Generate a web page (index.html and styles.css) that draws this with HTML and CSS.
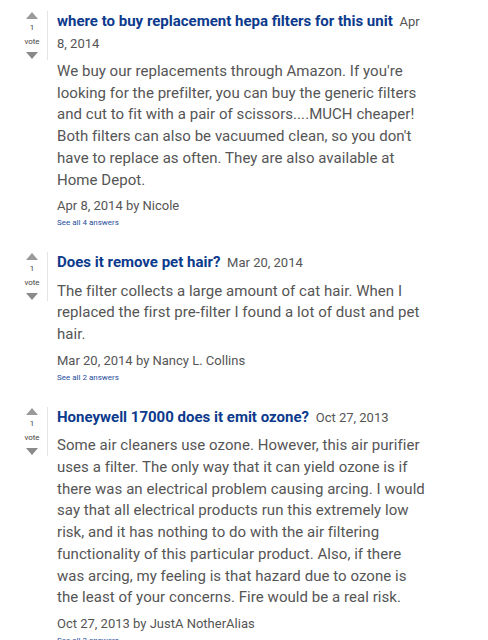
FILE: index.html
```html
<!DOCTYPE html>
<html>
<head>
<meta charset="utf-8">
<link rel="stylesheet" href="styles.css">
</head>
<body>
<div class="page">
  <div class="qa">
    <div class="vote">
      <span class="tri up"></span>
      <span class="count">1</span>
      <span class="label">vote</span>
      <span class="tri down"></span>
    </div>
    <div class="content">
      <div class="question"><a class="title">where to buy replacement hepa filters for this unit</a> <span class="qdate">Apr 8, 2014</span></div>
      <p class="answer">We buy our replacements through Amazon. If you're looking for the prefilter, you can buy the generic filters and cut to fit with a pair of scissors....MUCH cheaper! Both filters can also be vacuumed clean, so you don't have to replace as often. They are also available at Home Depot.</p>
      <div class="meta">Apr 8, 2014 by Nicole</div>
      <a class="seeall">See all 4 answers</a>
    </div>
  </div>
  <div class="qa">
    <div class="vote">
      <span class="tri up"></span>
      <span class="count">1</span>
      <span class="label">vote</span>
      <span class="tri down"></span>
    </div>
    <div class="content">
      <div class="question"><a class="title">Does it remove pet hair?</a> <span class="qdate">Mar 20, 2014</span></div>
      <p class="answer">The filter collects a large amount of cat hair. When I replaced the first pre-filter I found a lot of dust and pet hair.</p>
      <div class="meta">Mar 20, 2014 by Nancy L. Collins</div>
      <a class="seeall">See all 2 answers</a>
    </div>
  </div>
  <div class="qa">
    <div class="vote">
      <span class="tri up"></span>
      <span class="count">1</span>
      <span class="label">vote</span>
      <span class="tri down"></span>
    </div>
    <div class="content">
      <div class="question"><a class="title">Honeywell 17000 does it emit ozone?</a> <span class="qdate">Oct 27, 2013</span></div>
      <p class="answer">Some air cleaners use ozone. However, this air purifier uses a filter. The only way that it can yield ozone is if there was an electrical problem causing arcing. I would say that all electrical products run this extremely low risk, and it has nothing to do with the air filtering functionality of this particular product. Also, if there was arcing, my feeling is that hazard due to ozone is the least of your concerns. Fire would be a real risk.</p>
      <div class="meta">Oct 27, 2013 by JustA NotherAlias</div>
      <a class="seeall">See all 2 answers</a>
    </div>
  </div>
</div>
</body>
</html>
```
FILE: styles.css
```css
html, body {
  margin: 0;
  padding: 0;
  background: #ffffff;
}
body {
  font-family: Roboto, "Liberation Sans", sans-serif;
  color: #555555;
}
.page {
  padding: 11px 0 0 20px;
  width: 406px;
}
.qa {
  display: flex;
  align-items: flex-start;
  margin-bottom: 23px;
}
.vote {
  width: 24px;
  flex: none;
  padding-right: 3px;
  border-right: 1px solid #e4e4e4;
  display: flex;
  flex-direction: column;
  align-items: center;
  padding-bottom: 1px;
}
.tri {
  width: 0;
  height: 0;
  border-left: 6.5px solid transparent;
  border-right: 6.5px solid transparent;
}
.tri.up {
  margin-top: 1px;
  border-bottom: 7px solid #9a9a9a;
}
.tri.down {
  margin-top: 5px;
  border-top: 7px solid #8a8a8a;
}
.count, .label {
  font-size: 8px;
  line-height: 10px;
  color: #444444;
}
.count { margin-top: 4px; }
.label { margin-top: 4px; }
.content {
  padding-left: 9px;
  flex: 1;
}
.question {
  font-size: 15px;
  line-height: 21.5px;
}
.title {
  font-weight: bold;
  color: #0c3a8c;
  margin-right: 3px;
}
.qdate {
  font-size: 13px;
  color: #555555;
}
.answer {
  margin: 7px 0 0;
  font-size: 15px;
  line-height: 21.7px;
  letter-spacing: 0.05px;
  color: #555555;
}
.meta {
  margin-top: 6px;
  font-size: 13px;
  line-height: 18px;
  color: #555555;
}
.seeall {
  display: block;
  margin-top: 2px;
  font-size: 8px;
  line-height: 12px;
  color: #1f4d9c;
}
```
